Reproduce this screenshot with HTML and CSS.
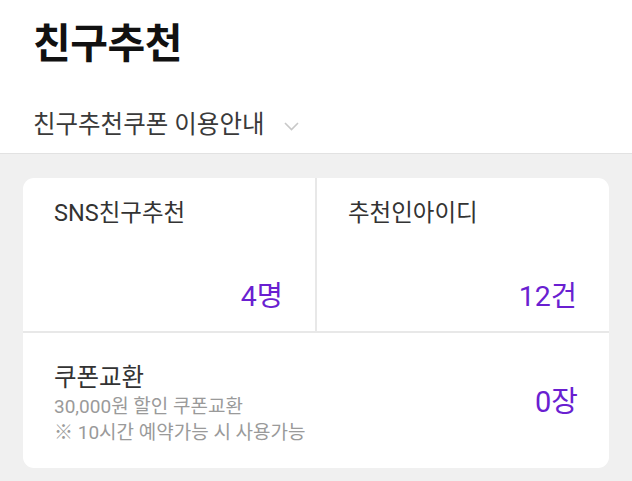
FILE: index.html
```html
<!DOCTYPE html>
<html lang="ko">
<head>
<meta charset="utf-8">
<link rel="stylesheet" href="styles.css">
</head>
<body>
<header class="header">
  <h1 class="title">친구추천</h1>
  <div class="guide">
    <span class="guide-text">친구추천쿠폰 이용안내</span>
    <svg class="chevron" width="15" height="9" viewBox="0 0 15 9"><path d="M1 1 L7.5 7.5 L14 1" fill="none" stroke="#c8c8c8" stroke-width="1.6"/></svg>
  </div>
</header>
<main class="main">
  <section class="card">
    <div class="stats">
      <div class="stat">
        <div class="stat-label">SNS친구추천</div>
        <div class="stat-value">4명</div>
      </div>
      <div class="stat">
        <div class="stat-label">추천인아이디</div>
        <div class="stat-value">12건</div>
      </div>
    </div>
    <div class="exchange">
      <div class="exchange-info">
        <div class="exchange-title">쿠폰교환</div>
        <div class="exchange-desc">30,000원 할인 쿠폰교환</div>
        <div class="exchange-desc">※ 10시간 예약가능 시 사용가능</div>
      </div>
      <div class="exchange-value">0장</div>
    </div>
  </section>
</main>
</body>
</html>
```
FILE: styles.css
```css
* { box-sizing: border-box; }
html, body { margin: 0; padding: 0; }
body {
  width: 632px;
  height: 481px;
  overflow: hidden;
  background: #f0f0f0;
  font-family: Roboto, "Noto Sans CJK KR", sans-serif;
  color: #333;
}
.header {
  background: #fff;
  padding: 15px 0 0 33px;
  height: 154px;
  border-bottom: 1px solid #e2e2e2;
}
.title {
  margin: 0;
  font-size: 41px;
  font-weight: 700;
  line-height: 58px;
  color: #111;
  letter-spacing: -0.5px;
}
.guide {
  margin-top: 35px;
  display: flex;
  align-items: center;
  gap: 20px;
}
.guide-text {
  font-size: 24.5px;
  line-height: 34px;
  color: #3a3a3a;
}
.chevron { margin-top: 2px; }
.main {
  padding: 24px 23px;
}
.card {
  background: #fff;
  border-radius: 11px;
  overflow: hidden;
}
.stats {
  display: grid;
  grid-template-columns: 292px 1fr;
  border-bottom: 2px solid #e8e8e8;
}
.stat {
  height: 153px;
  padding: 19px 32px 15px 31px;
  display: flex;
  flex-direction: column;
  justify-content: space-between;
}
.stat + .stat {
  border-left: 2px solid #e8e8e8;
}
.stat-label {
  font-size: 23.5px;
  line-height: 32px;
  color: #333;
}
.stat-value {
  align-self: flex-end;
  font-size: 28.5px;
  line-height: 38px;
  color: #6a1fd1;
}
.exchange {
  height: 135px;
  padding: 6px 31px 0;
  display: flex;
  align-items: center;
  justify-content: space-between;
}
.exchange-title {
  font-size: 24.5px;
  line-height: 33px;
  color: #333;
}
.exchange-desc {
  font-size: 19px;
  line-height: 26px;
  color: #9a9a9a;
}
.exchange-value {
  font-size: 29px;
  line-height: 38px;
  color: #6a1fd1;
  margin-top: -4px;
}
```
